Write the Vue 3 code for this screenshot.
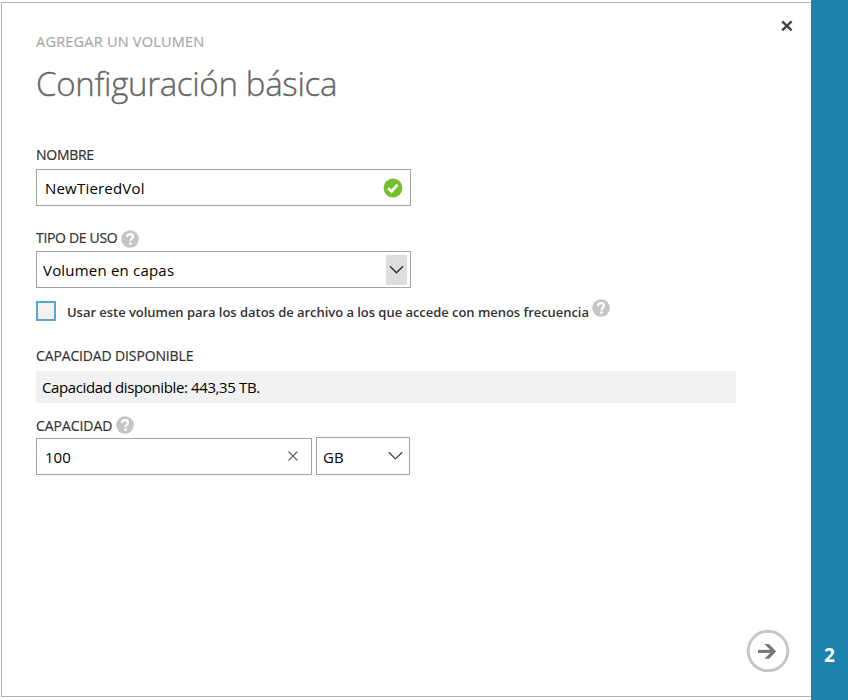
<script setup>
import { ref } from 'vue'
const name = ref('NewTieredVol')
const capacity = ref('100')
const usage = 'Volumen en capas'
const unit = 'GB'
const step = 2
const helpPath = 'M5.9 7.1C5.9 5.2 7.2 4.2 9 4.2S12 5.2 12 6.8C12 8.6 9.5 8.9 9.5 10.9'
</script>

<template>
  <div class="screen">
    <main class="dialog">
      <div class="eyebrow">AGREGAR UN VOLUMEN</div>
      <h1 class="title">Configuración básica</h1>

      <div class="label label-name"><span>NOMBRE</span></div>
      <div class="field field-name">
        <span class="value t-spaced">{{ name }}</span>
        <svg class="check" width="20" height="20" viewBox="0 0 20 20">
          <circle cx="10" cy="10" r="9.4" fill="#74c02c" />
          <path d="M5.2 10.3L8.5 13.5L14.5 6.6" fill="none" stroke="#fff" stroke-width="2.7" />
        </svg>
      </div>

      <div class="label label-type">
        <span>TIPO DE USO</span>
        <svg class="help help-type" width="18" height="18" viewBox="0 0 18 18">
          <circle cx="9" cy="9" r="8.8" fill="#c5c5c5" />
          <path :d="helpPath" fill="none" stroke="#fff" stroke-width="2.2" />
          <rect x="8.2" y="12.3" width="2.5" height="2.4" fill="#fff" />
        </svg>
      </div>
      <div class="field field-type">
        <span class="value t-spaced">{{ usage }}</span>
        <span class="drop">
          <svg width="15" height="10" viewBox="0 0 15 10"><path d="M1 1.2L7.5 7.8L14 1.2" fill="none" stroke="#333" stroke-width="1.5" /></svg>
        </span>
      </div>

      <div class="option">
        <span class="box"></span>
        <span class="option-text">Usar este volumen para los datos de archivo a los que accede con menos frecuencia</span>
        <svg class="help help-option" width="18" height="18" viewBox="0 0 18 18">
          <circle cx="9" cy="9" r="8.8" fill="#c5c5c5" />
          <path :d="helpPath" fill="none" stroke="#fff" stroke-width="2.2" />
          <rect x="8.2" y="12.3" width="2.5" height="2.4" fill="#fff" />
        </svg>
      </div>

      <div class="label label-available"><span>CAPACIDAD DISPONIBLE</span></div>
      <div class="available">Capacidad disponible: 443,35 TB.</div>

      <div class="label label-capacity">
        <span>CAPACIDAD</span>
        <svg class="help help-capacity" width="18" height="18" viewBox="0 0 18 18">
          <circle cx="9" cy="9" r="8.8" fill="#c5c5c5" />
          <path :d="helpPath" fill="none" stroke="#fff" stroke-width="2.2" />
          <rect x="8.2" y="12.3" width="2.5" height="2.4" fill="#fff" />
        </svg>
      </div>
      <div class="capacity-row">
        <div class="field field-capacity">
          <span class="value">{{ capacity }}</span>
          <svg class="clear" width="10" height="10" viewBox="0 0 10 10"><path d="M.5 .5L9.5 9.5M9.5 .5L.5 9.5" stroke="#666" stroke-width="1.2" /></svg>
        </div>
        <div class="field field-unit">
          <span class="value t-unit">{{ unit }}</span>
          <svg class="unit-arrow" width="15" height="10" viewBox="0 0 15 10"><path d="M.8 1.2L7.5 7.9L14.2 1.2" fill="none" stroke="#444" stroke-width="1.3" /></svg>
        </div>
      </div>

      <svg class="close" width="12" height="12" viewBox="0 0 12 12"><path d="M1.2 1.3L10.6 10.3M10.6 1.3L1.2 10.3" stroke="#444" stroke-width="2.5" /></svg>
      <svg class="next" width="44" height="44" viewBox="0 0 44 44">
        <circle cx="22" cy="22" r="19.8" fill="#fff" stroke="#c6c6c6" stroke-width="2.9" />
        <path d="M12 22.4H28" stroke="#777" stroke-width="3" />
        <path d="M18.5 15H23L30.2 22.4L23 29.8H18.5L25.6 22.4Z" fill="#777" />
      </svg>
    </main>
    <aside class="rail"><span class="step">{{ step }}</span></aside>
  </div>
</template>

<style>
body { margin: 0; background: #fff; overflow: hidden; }
</style>

<style scoped>
* { box-sizing: border-box; }
.screen {
  display: flex;
  width: 848px;
  height: 700px;
  padding: 0 0 0 1px;
  background: #fff;
  font-family: "Open Sans", "Noto Sans", sans-serif;
  font-size: 14px;
  line-height: 20px;
  white-space: nowrap;
  color: #333;
}
.dialog {
  position: relative;
  width: 810px;
  height: 695px;
  margin-top: 2px;
  padding: 29px 0 0 34px;
  border: 1px solid #b3b3b3;
  border-right: 0;
}
.eyebrow { height: 20px; color: #a8a8a8; font-size: 14.5px; letter-spacing: .22px; -webkit-text-stroke: .2px #a8a8a8; }
.title { margin: 10px 0 0; height: 44px; line-height: 44px; font-size: 33px; font-weight: 300; letter-spacing: -.31px; color: #666; -webkit-text-stroke: .35px #666; }
.label { display: flex; align-items: center; height: 20px; font-size: 14px; letter-spacing: -.27px; -webkit-text-stroke: .2px #333; }
.label-name { margin-top: 39px; }
.label-type { margin-top: 22px; letter-spacing: -.32px; }
.label-available { margin-top: 25px; letter-spacing: -.14px; }
.label-capacity { margin-top: 13px; letter-spacing: -.05px; }
.help { flex: none; margin-left: 3px; }
.help-type { margin-left: 4px; margin-top: 1px; }
.help-capacity { margin-top: -2px; margin-left: 4px; }
.field {
  display: flex;
  align-items: center;
  justify-content: space-between;
  height: 37px;
  width: 375px;
  border: 1px solid #a3a3a3;
  color: #000;
  background: #fff;
  font-size: 15px;
}
.field-name { margin-top: 4px; padding: 0 7px 0 8px; }
.field-type { margin-top: 3px; padding: 0 3px 0 6px; }
.value { margin-top: 1px; }
.t-spaced { letter-spacing: .2px; }
.t-unit { margin-top: 1px; }
.drop { display: flex; align-items: center; justify-content: center; width: 21px; height: 30px; background: #ddd; }
.option { display: flex; align-items: center; height: 20px; margin-top: 13px; font-size: 13px; font-weight: 600; letter-spacing: -.04px; }
.box { width: 20px; height: 20px; border: 2px solid #5ba5d3; background: #f2f2f2; }
.option-text { margin: 2px 0 0 11px; }
.help-option { margin: -6px 0 0 3px; }
.available { width: 700px; height: 32px; margin-top: 5px; padding-left: 6px; line-height: 33px; font-size: 15px; letter-spacing: -.38px; background: #f1f1f1; color: #000; }
.capacity-row { display: flex; align-items: flex-end; gap: 4px; height: 38px; margin-top: 1px; }
.field-capacity { width: 276px; padding: 0 13px 0 8px; }
.clear { margin-bottom: 2px; }
.field-unit { width: 94px; height: 38px; padding: 0 6px; }
.close { position: absolute; right: 18px; top: 17px; }
.next { position: absolute; right: 21px; bottom: 23px; }
.rail { display: flex; align-items: flex-end; justify-content: center; width: 37px; height: 700px; padding-bottom: 35px; background: #1e82af; color: #fff; }
.step { font-size: 19px; font-weight: 700; }
</style>
